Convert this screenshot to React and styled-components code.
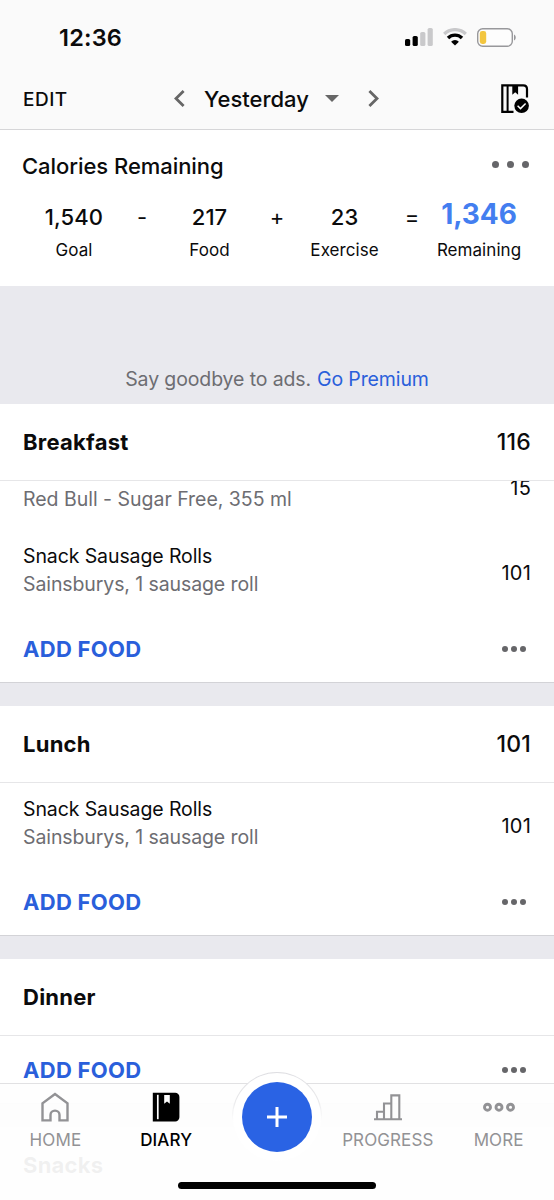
import React from 'react';
import styled, { createGlobalStyle } from 'styled-components';

const GlobalStyle = createGlobalStyle`
  * {
    box-sizing: border-box;
  }
  body {
    margin: 0;
    background: #fff;
    color: #0b0b0c;
    font-family: Inter, "Liberation Sans", sans-serif;
  }
`;

const Screen = styled.div`
  position: relative;
  display: flex;
  flex-direction: column;
  width: 554px;
  height: 1200px;
  overflow: hidden;
  background: #e9e9ee;
`;

const TopArea = styled.header`
  flex: none;
  height: 130px;
  background: #fafafa;
  border-bottom: 1px solid #d6d6d8;
`;

const StatusBar = styled.div`
  display: flex;
  align-items: center;
  justify-content: space-between;
  height: 74px;
  padding: 0 37px 0 59px;
`;

const Clock = styled.span`
  font-size: 23.5px;
  font-weight: 600;
  letter-spacing: 0.2px;
`;

const StatusIcons = styled.div`
  display: flex;
  align-items: center;
  gap: 10px;
`;

const DateBar = styled.div`
  display: grid;
  grid-template-columns: 1fr auto 1fr;
  align-items: center;
  height: 49px;
  padding: 0 25px 0 23px;
`;

const EditButton = styled.button`
  justify-self: start;
  padding: 2px 0 0;
  border: none;
  background: none;
  color: inherit;
  font: 500 19px Inter, sans-serif;
  letter-spacing: 0.5px;
`;

const DatePicker = styled.div`
  display: flex;
  align-items: center;
  padding-left: 1px;
`;

const DateName = styled.span`
  margin: 0 16px 0 19px;
  font-size: 22px;
  font-weight: 450;
  letter-spacing: 0;
`;

const CaretDown = styled.i`
  margin-right: 29px;
  border: 7px solid transparent;
  border-top-color: #666;
  border-bottom: none;
`;

const DiaryDone = styled.div`
  display: flex;
  justify-self: end;
`;

const Summary = styled.section`
  flex: none;
  height: 156px;
  background: #fff;
`;

const SummaryHead = styled.div`
  display: flex;
  align-items: center;
  justify-content: space-between;
  height: 72px;
  padding: 0 25px 0 22px;
`;

const SummaryTitle = styled.h2`
  margin: 0;
  font-size: 22px;
  font-weight: 450;
  letter-spacing: -0.05px;
`;

const Dots = styled.div`
  display: flex;
  gap: ${({ $gap }) => $gap}px;

  i {
    width: ${({ $size }) => $size}px;
    height: ${({ $size }) => $size}px;
    border-radius: 50%;
    background: #666669;
  }
`;

const SummaryMenu = styled(Dots)`
  margin-bottom: 4px;
`;

const Equation = styled.div`
  display: grid;
  grid-template-columns: 104px 32px 103px 32px 103px 32px 102px;
  padding-left: 22px;
  text-align: center;
`;

const Figure = styled.div`
  display: flex;
  flex-direction: column;
  align-items: center;
`;

const Amount = styled.span`
  height: 30px;
  line-height: ${({ $highlight }) => ($highlight ? 24 : 30)}px;
  font-size: ${({ $highlight }) => ($highlight ? 28 : 22)}px;
  font-weight: ${({ $highlight }) => ($highlight ? 700 : 450)};
  letter-spacing: ${({ $highlight }) => ($highlight ? -0.1 : 0.1)}px;
  color: ${({ $highlight }) => ($highlight ? '#437ef0' : 'inherit')};
`;

const AmountLabel = styled.span`
  margin-top: 6px;
  font-size: 17px;
  line-height: 24px;
  letter-spacing: 0.05px;
`;

const Operator = styled.span`
  font-size: 22px;
  line-height: 30px;
`;

const AdBanner = styled.aside`
  flex: none;
  display: flex;
  align-items: flex-end;
  justify-content: center;
  height: 118px;
  padding-bottom: 13px;
  font-size: 19.5px;
  line-height: 24px;
  letter-spacing: -0.12px;
  color: #6d6d72;
`;

const PremiumLink = styled.a`
  margin-left: 6px;
  color: #2a5fdb;
`;

const Meal = styled.section`
  flex: none;
  margin-bottom: 23px;
  background: #fff;
  border-bottom: 1px solid #d3d3d7;
`;

const MealHead = styled.div`
  display: flex;
  align-items: center;
  justify-content: space-between;
  height: 77px;
  padding: 0 23px;
  border-bottom: 1px solid #e6e6e8;
`;

const MealName = styled.h3`
  margin: 0;
  font-size: 22px;
  font-weight: 700;
  letter-spacing: 0.25px;
`;

const MealTotal = styled.span`
  font-size: 23px;
  font-weight: 500;
  letter-spacing: 0.2px;
`;

// Entries stay pinned to the bottom, so a clipped list cuts its first row.
const FoodList = styled.div`
  display: flex;
  flex-direction: column;
  justify-content: flex-end;
  height: ${({ $height }) => $height}px;
  overflow: hidden;
`;

const FoodRow = styled.div`
  flex: none;
  display: flex;
  align-items: center;
  justify-content: space-between;
  height: 85px;
  padding: 0 23px;
  font-size: 19.5px;
`;

const FoodText = styled.div`
  display: grid;
  grid-template-rows: 28px 29px;
  margin-top: -4px;
  line-height: 28px;
  letter-spacing: -0.1px;
`;

const Portion = styled.span`
  grid-row: 2;
  color: #6d6d72;
  letter-spacing: ${({ $long }) => ($long ? -0.02 : -0.1)}px;
`;

const FoodCalories = styled.span`
  padding-top: 1px;
  font-size: 20px;
  letter-spacing: 0.2px;
`;

const AddRow = styled.div`
  display: flex;
  align-items: center;
  justify-content: space-between;
  height: 67px;
  padding: 0 28px 0 23px;
`;

const AddButton = styled.button`
  padding: 0;
  border: none;
  background: none;
  color: #2a5fdb;
  font: 700 22px Inter, sans-serif;
  letter-spacing: 0.3px;
`;

const TabBar = styled.nav`
  position: absolute;
  left: 0;
  right: 0;
  bottom: 0;
  height: 117px;
  background: rgba(254, 254, 254, 0.945);
  border-top: 1px solid #e1e1e3;
`;

const Tabs = styled.div`
  display: grid;
  grid-template-columns: repeat(5, 110.8px);
  padding-top: 8px;
`;

const Tab = styled.div`
  display: flex;
  flex-direction: column;
  align-items: center;
  color: ${({ $active }) => ($active ? '#000' : '#929295')};
  font-size: 17px;
  line-height: 24px;
  letter-spacing: 0.1px;
  font-weight: ${({ $active }) => ($active ? 500 : 400)};

  svg {
    margin-bottom: 5px;
  }
`;

const AddRing = styled.div`
  position: absolute;
  left: 232px;
  top: -12px;
  display: flex;
  align-items: center;
  justify-content: center;
  width: 90px;
  height: 90px;
  border-radius: 50%;
  background: linear-gradient(#fff, #fff) padding-box,
    linear-gradient(#dedee2, #e8e8ea 30%, #fefefe 55%) border-box;
  border: 1px solid transparent;
`;

const AddCircle = styled.button`
  display: flex;
  align-items: center;
  justify-content: center;
  width: 70px;
  height: 70px;
  margin-bottom: 1px;
  padding: 0;
  border: none;
  border-radius: 50%;
  background: #2a63e4;
`;

const HomeIndicator = styled.div`
  position: absolute;
  left: 178px;
  bottom: 11px;
  width: 198px;
  height: 7px;
  border-radius: 4px;
  background: #000;
`;

const meals = [
  {
    name: 'Breakfast',
    total: '116',
    height: 134,
    foods: [
      { portion: 'Red Bull - Sugar Free, 355 ml', calories: 15 },
      { name: 'Snack Sausage Rolls', portion: 'Sainsburys, 1 sausage roll', calories: 101 },
    ],
  },
  {
    name: 'Lunch',
    total: '101',
    height: 85,
    foods: [
      { name: 'Snack Sausage Rolls', portion: 'Sainsburys, 1 sausage roll', calories: 101 },
    ],
  },
  { name: 'Dinner', foods: [], height: 0 },
];

function SignalIcon() {
  return (
    <svg width="28" height="18" viewBox="0 0 28 18">
      <rect x="0" y="11" width="5.2" height="7" rx="1.6" fill="#000" />
      <rect x="7.6" y="8" width="5.2" height="10" rx="1.6" fill="#000" />
      <rect x="15.2" y="4" width="5.2" height="14" rx="1.6" fill="#c9c9cb" />
      <rect x="22.6" y="0" width="5.2" height="18" rx="1.6" fill="#c9c9cb" />
    </svg>
  );
}

function WifiIcon() {
  return (
    <svg width="24" height="18" viewBox="0 0 24 18" fill="none">
      <path d="M1.2 6a15.4 15.4 0 0 1 21.6 0" stroke="#c9c9cb" strokeWidth="3.2" />
      <path d="M5 10a9.9 9.9 0 0 1 14 0" stroke="#000" strokeWidth="3.4" />
      <path d="M12 17.6l-3.9-3.9a5.5 5.5 0 0 1 7.8 0z" fill="#000" />
    </svg>
  );
}

function BatteryIcon() {
  return (
    <svg width="40" height="19" viewBox="0 0 40 19">
      <rect x="0.7" y="0.7" width="34.6" height="17.6" rx="5" fill="#fdfdfd" stroke="#98989b" strokeWidth="1.4" />
      <rect x="2.8" y="3" width="6.4" height="13" rx="2.4" fill="#f3c63f" />
      <path d="M37 6.5c2.3.9 2.3 5.1 0 6z" fill="#98989b" />
    </svg>
  );
}

function Chevron({ right }) {
  return (
    <svg width="11" height="17" viewBox="0 0 11 17" fill="none" stroke="#666" strokeWidth="2.8">
      <path d={right ? 'M1.4 1l7.6 7.5-7.6 7.5' : 'M9.6 1L2 8.5 9.6 16'} />
    </svg>
  );
}

function DiaryDoneIcon() {
  return (
    <svg width="28" height="30" viewBox="0 0 28 30" fill="none">
      <path d="M12.5 27.8H1.3V1.3h21c2.3 0 3.7 1.3 3.7 3.6v8.6" stroke="#000" strokeWidth="2.2" />
      <path d="M6.6 1.5v26" stroke="#000" strokeWidth="2" />
      <path d="M11.3 1.5h5.8v9.2l-2.9-2.4-2.9 2.4z" fill="#000" />
      <circle cx="20.6" cy="21.8" r="7.3" fill="#000" />
      <path d="M16.6 21.8l2.9 2.8 5.1-5.1" stroke="#fff" strokeWidth="1.5" />
    </svg>
  );
}

function HomeIcon() {
  return (
    <svg width="28" height="31" viewBox="0 0 28 31" fill="none" stroke="#929295" strokeWidth="2.4">
      <path d="M1.5 28.4V11.3L14 2l12.5 9.3v17.1h-8v-5.3a4.5 4.5 0 0 0-9 0v5.3z" />
    </svg>
  );
}

function DiaryIcon() {
  return (
    <svg width="28" height="31" viewBox="0 0 28 31">
      <path d="M.8.8h22.4A4.2 4.2 0 0 1 27.4 5v20.2a4.2 4.2 0 0 1-4.2 4.2H.8z" fill="#000" />
      <path d="M5.8 2.8v24.4" stroke="#fff" strokeWidth="1.7" />
      <path d="M12.2 3h5.6v8.8L15 9.5l-2.8 2.3z" fill="#fff" />
    </svg>
  );
}

function ProgressIcon() {
  return (
    <svg width="28" height="31" viewBox="0 0 28 31" fill="none" stroke="#929295" strokeWidth="2.1">
      <path d="M0 27.2h28M3 27v-7.2h7M10 27V11.5h7.2M17.3 27V3.4h8V27" />
    </svg>
  );
}

function MoreIcon() {
  return (
    <svg width="32" height="31" viewBox="0 0 32 31" fill="none" stroke="#929295" strokeWidth="2.9">
      <circle cx="4.5" cy="15.2" r="3" />
      <circle cx="16" cy="15.2" r="3" />
      <circle cx="27.5" cy="15.2" r="3" />
    </svg>
  );
}

function App() {
  return (
    <Screen>
      <GlobalStyle />
      <TopArea>
        <StatusBar>
          <Clock>12:36</Clock>
          <StatusIcons>
            <SignalIcon />
            <WifiIcon />
            <BatteryIcon />
          </StatusIcons>
        </StatusBar>
        <DateBar>
          <EditButton>EDIT</EditButton>
          <DatePicker>
            <Chevron />
            <DateName>Yesterday</DateName>
            <CaretDown />
            <Chevron right />
          </DatePicker>
          <DiaryDone><DiaryDoneIcon /></DiaryDone>
        </DateBar>
      </TopArea>

      <Summary>
        <SummaryHead>
          <SummaryTitle>Calories Remaining</SummaryTitle>
          <SummaryMenu $size={7} $gap={8}><i /><i /><i /></SummaryMenu>
        </SummaryHead>
        <Equation>
          <Figure><Amount>1,540</Amount><AmountLabel>Goal</AmountLabel></Figure>
          <Operator>-</Operator>
          <Figure><Amount>217</Amount><AmountLabel>Food</AmountLabel></Figure>
          <Operator>+</Operator>
          <Figure><Amount>23</Amount><AmountLabel>Exercise</AmountLabel></Figure>
          <Operator>=</Operator>
          <Figure><Amount $highlight>1,346</Amount><AmountLabel>Remaining</AmountLabel></Figure>
        </Equation>
      </Summary>

      <AdBanner>
        Say goodbye to ads. <PremiumLink>Go Premium</PremiumLink>
      </AdBanner>

      {meals.map(meal => (
        <Meal key={meal.name}>
          <MealHead>
            <MealName>{meal.name}</MealName>
            {meal.total && <MealTotal>{meal.total}</MealTotal>}
          </MealHead>
          <FoodList $height={meal.height}>
            {meal.foods.map(food => (
              <FoodRow key={food.portion}>
                <FoodText>
                  {food.name && <span>{food.name}</span>}
                  <Portion $long={!food.name}>{food.portion}</Portion>
                </FoodText>
                <FoodCalories>{food.calories}</FoodCalories>
              </FoodRow>
            ))}
          </FoodList>
          <AddRow>
            <AddButton>ADD FOOD</AddButton>
            <Dots $size={6} $gap={3}><i /><i /><i /></Dots>
          </AddRow>
        </Meal>
      ))}
      <Meal>
        <MealHead><MealName>Snacks</MealName></MealHead>
      </Meal>

      <TabBar>
        <Tabs>
          <Tab><HomeIcon />HOME</Tab>
          <Tab $active><DiaryIcon />DIARY</Tab>
          <span />
          <Tab><ProgressIcon />PROGRESS</Tab>
          <Tab><MoreIcon />MORE</Tab>
        </Tabs>
        <AddRing>
          <AddCircle>
            <svg width="20" height="20" viewBox="0 0 20 20" stroke="#fff" strokeWidth="3">
              <path d="M10 0v20M0 10h20" />
            </svg>
          </AddCircle>
        </AddRing>
        <HomeIndicator />
      </TabBar>
    </Screen>
  );
}

export default App;
